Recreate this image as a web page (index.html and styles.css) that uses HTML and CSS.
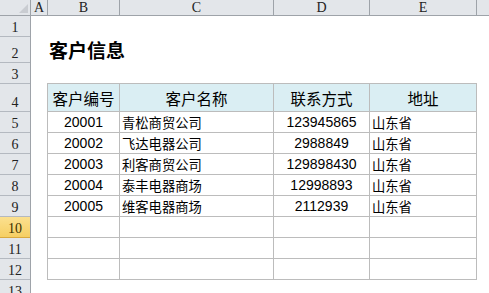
FILE: index.html
```html
<!DOCTYPE html>
<html lang="zh-CN">
<head>
<meta charset="utf-8">
<title>客户信息</title>
<link rel="stylesheet" href="styles.css">
</head>
<body>
<div class="sheet">
  <div class="colheads">
    <div class="corner">
      <svg class="corner-tri" width="9" height="9" viewBox="0 0 9 9"><polygon points="9,0 9,9 0,9" fill="#c9ccd1"/></svg>
    </div>
    <div class="ch w-a">A</div>
    <div class="ch w-b">B</div>
    <div class="ch w-c">C</div>
    <div class="ch w-d">D</div>
    <div class="ch w-e">E</div>
    <div class="ch w-f"></div>
  </div>
  <div class="main">
    <div class="rowheads">
      <div class="rh h21">1</div>
      <div class="rh h26">2</div>
      <div class="rh h21">3</div>
      <div class="rh h28">4</div>
      <div class="rh h21">5</div>
      <div class="rh h21">6</div>
      <div class="rh h21">7</div>
      <div class="rh h21">8</div>
      <div class="rh h21">9</div>
      <div class="rh h21 active">10</div>
      <div class="rh h21">11</div>
      <div class="rh h21">12</div>
      <div class="rh h21">13</div>
    </div>
    <div class="body">
      <div class="row1"></div>
      <div class="row2"><h1 class="title">客户信息</h1></div>
      <div class="row3"></div>
      <div class="table">
        <div class="cell head">客户编号</div>
        <div class="cell head">客户名称</div>
        <div class="cell head">联系方式</div>
        <div class="cell head">地址</div>

        <div class="cell num">20001</div>
        <div class="cell cn">青松商贸公司</div>
        <div class="cell num">123945865</div>
        <div class="cell cn">山东省</div>

        <div class="cell num">20002</div>
        <div class="cell cn">飞达电器公司</div>
        <div class="cell num">2988849</div>
        <div class="cell cn">山东省</div>

        <div class="cell num">20003</div>
        <div class="cell cn">利客商贸公司</div>
        <div class="cell num">129898430</div>
        <div class="cell cn">山东省</div>

        <div class="cell num">20004</div>
        <div class="cell cn">泰丰电器商场</div>
        <div class="cell num">12998893</div>
        <div class="cell cn">山东省</div>

        <div class="cell num">20005</div>
        <div class="cell cn">维客电器商场</div>
        <div class="cell num">2112939</div>
        <div class="cell cn">山东省</div>

        <div class="cell"></div><div class="cell"></div><div class="cell"></div><div class="cell"></div>
        <div class="cell"></div><div class="cell"></div><div class="cell"></div><div class="cell"></div>
        <div class="cell"></div><div class="cell"></div><div class="cell"></div><div class="cell"></div>
      </div>
    </div>
  </div>
</div>
</body>
</html>
```

FILE: styles.css
```css
* { box-sizing: border-box; }
html, body { margin: 0; padding: 0; background: #fff; }
.sheet {
  width: 489px;
  height: 293px;
  overflow: hidden;
  display: flex;
  flex-direction: column;
}
.colheads {
  display: flex;
  height: 16px;
  flex: none;
  background: #e3e6ea;
  border-bottom: 1px solid #9ea3a9;
}
.corner {
  width: 31px;
  flex: none;
  border-right: 1px solid #9ea3a9;
  position: relative;
}
.corner-tri { position: absolute; left: 19px; top: 4px; }
.ch {
  flex: none;
  border-right: 1px solid #9ea3a9;
  font-family: "Liberation Serif", "DejaVu Serif", serif;
  font-size: 14px;
  line-height: 15px;
  color: #222;
  text-align: center;
}
.w-a { width: 17px; }
.w-b { width: 72px; }
.w-c { width: 154px; }
.w-d { width: 96px; }
.w-e { width: 107px; }
.w-f { flex: 1; border-right: none; }

.main { display: flex; flex: 1; min-height: 0; }
.rowheads {
  width: 31px;
  flex: none;
  background: #e3e6ea;
  border-right: 1px solid #9ea3a9;
  display: flex;
  flex-direction: column;
}
.rh {
  flex: none;
  border-bottom: 1px solid #b4b9c0;
  display: flex;
  align-items: flex-end;
  justify-content: center;
  padding-bottom: 1px;
  font-family: "Liberation Serif", "DejaVu Serif", serif;
  font-size: 14px;
  line-height: 15px;
  color: #222;
}
.h21 { height: 21px; }
.h26 { height: 26px; }
.h28 { height: 28px; }
.rh.active {
  background: linear-gradient(#fbe08f, #f6cf63);
  border-bottom-color: #d9a93e;
  color: #3a3000;
}

.body { flex: 1; min-width: 0; background: #fff; }
.row1 { height: 21px; }
.row2 { height: 26px; display: flex; align-items: center; padding-left: 18px; }
.row3 { height: 20px; }
.title {
  margin: 0;
  font-family: "Noto Sans CJK SC", "Liberation Sans", sans-serif;
  font-weight: bold;
  font-size: 19px;
  line-height: 22px;
  color: #000;
}
.table {
  margin-left: 16px;
  display: grid;
  grid-template-columns: 72px 154px 96px 107px;
  grid-template-rows: 28px;
  grid-auto-rows: 21px;
  width: max-content;
  border-left: 1px solid #bcbcbc;
  border-top: 1px solid #bcbcbc;
}
.cell {
  border-right: 1px solid #bcbcbc;
  border-bottom: 1px solid #bcbcbc;
  display: flex;
  align-items: center;
  font-family: "Liberation Sans", "Noto Sans CJK SC", sans-serif;
  font-size: 14px;
  color: #000;
  white-space: nowrap;
  overflow: hidden;
}
.head {
  background: #daeef3;
  justify-content: center;
  font-family: "Noto Sans CJK SC", sans-serif;
  font-size: 15.5px;
}
.num { justify-content: center; }
.cn {
  justify-content: flex-start;
  padding-left: 2px;
  font-family: "Noto Sans CJK SC", sans-serif;
  font-size: 13.3px;
}
```
